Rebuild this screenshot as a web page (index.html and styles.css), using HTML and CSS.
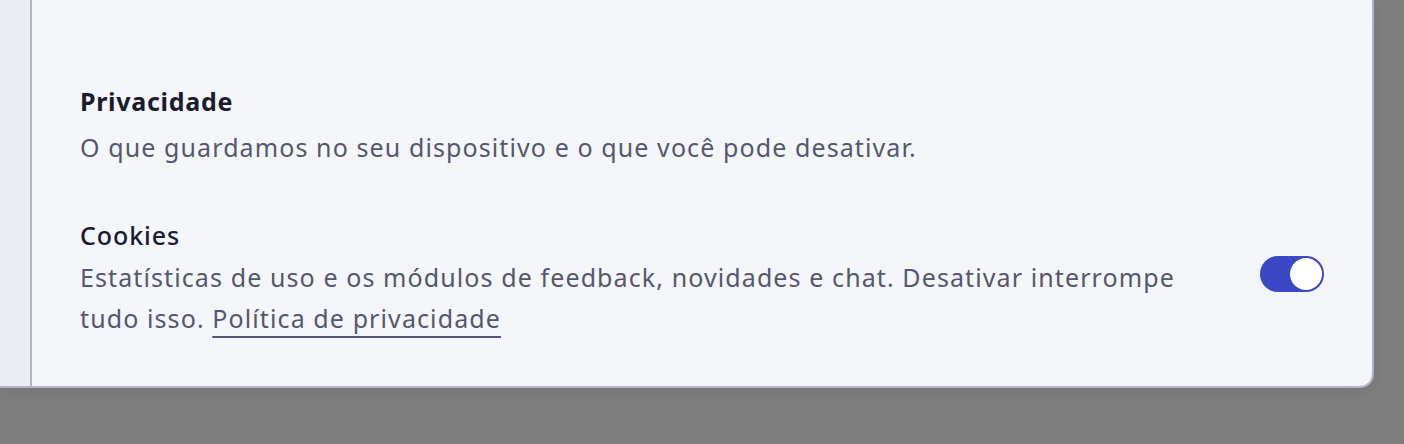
FILE: index.html
```html
<!DOCTYPE html>
<html lang="pt-BR">
<head>
<meta charset="utf-8">
<title>Privacidade</title>
<link rel="stylesheet" href="styles.css">
</head>
<body>
<div class="modal">
  <aside class="sidebar"></aside>
  <main class="content">
    <section class="section">
      <h2 class="section-title">Privacidade</h2>
      <p class="section-desc">O que guardamos no seu dispositivo e o que você pode desativar.</p>
    </section>
    <div class="setting">
      <div class="setting-text">
        <h3 class="setting-label">Cookies</h3>
        <p class="setting-desc">Estatísticas de uso e os módulos de feedback, novidades e chat. Desativar interrompe tudo isso. <a class="link" href="#">Política de privacidade</a></p>
      </div>
      <button class="toggle" type="button" role="switch" aria-checked="true"><span class="knob"></span></button>
    </div>
  </main>
</div>
</body>
</html>
```
FILE: styles.css
```css
html, body {
  margin: 0;
  padding: 0;
}
body {
  background: #7f7f7f;
  width: 1404px;
  height: 444px;
  overflow: hidden;
  font-family: "Noto Sans", "Open Sans", sans-serif;
}
.modal {
  display: flex;
  width: 1374px;
  height: 388px;
  box-sizing: border-box;
  border-right: 2px solid #b2b3c8;
  border-bottom: 2px solid #b2b3c8;
  border-bottom-right-radius: 14px;
  overflow: hidden;
  box-shadow: 0 6px 18px rgba(0, 0, 0, 0.08);
}
.sidebar {
  width: 30px;
  flex: none;
  background: #ecedf3;
  border-right: 2px solid #b2b3c8;
}
.content {
  flex: 1;
  background: #f5f6fa;
  padding: 84px 48px 0 48px;
  box-sizing: border-box;
}
.section-title {
  margin: 0;
  font-size: 25px;
  line-height: 34px;
  font-weight: 700;
  letter-spacing: 0.7px;
  color: #1b1b2f;
}
.section-desc {
  margin: 9px 0 0;
  font-size: 25px;
  line-height: 40px;
  letter-spacing: 1.1px;
  color: #55566f;
}
.setting {
  display: flex;
  align-items: center;
  gap: 48px;
  margin-top: 51px;
}
.setting-text {
  flex: 1;
  max-width: 1120px;
}
.setting-label {
  margin: 0;
  font-size: 25px;
  line-height: 34px;
  font-weight: 500;
  letter-spacing: 0.9px;
  color: #1b1b2f;
}
.setting-desc {
  margin: 5px 0 0;
  font-size: 25px;
  line-height: 41px;
  letter-spacing: 1.1px;
  color: #55566f;
}
.link {
  color: #55566f;
  text-decoration: underline;
  text-decoration-thickness: 2px;
  text-underline-offset: 8px;
}
.toggle {
  margin-left: auto;
  flex: none;
  width: 64px;
  height: 36px;
  padding: 2px;
  border: none;
  border-radius: 18px;
  background: #3b47c4;
  display: flex;
  justify-content: flex-end;
  align-items: center;
  box-sizing: border-box;
  margin-top: -10px;
}
.knob {
  width: 32px;
  height: 32px;
  border-radius: 50%;
  background: #ffffff;
}
```
